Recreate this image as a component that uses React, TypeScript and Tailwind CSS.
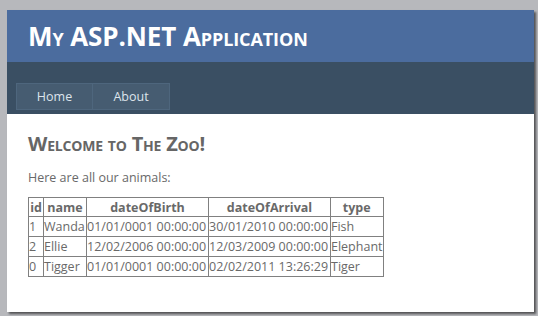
import React from "react";

const rows = [
  ["1", "Wanda", "01/01/0001 00:00:00", "30/01/2010 00:00:00", "Fish"],
  ["2", "Ellie", "12/02/2006 00:00:00", "12/03/2009 00:00:00", "Elephant"],
  ["0", "Tigger", "01/01/0001 00:00:00", "02/02/2011 13:26:29", "Tiger"],
];

const widths = ["w-[15px]", "w-[43px]", "w-[122px]", "w-[122px]", "w-[52px]"];

export default function App() {
  return (
    <div
      className="w-[538px] h-[316px] bg-[#b7b8bc] pt-[10px] pl-[7px] overflow-hidden"
      style={{ fontFamily: '"Open Sans", "Noto Sans", sans-serif' }}
    >
      <div className="w-[527px] h-[302px] bg-white shadow-[2px_2px_2px_rgba(0,0,0,0.55)] flex flex-col">
        <div className="h-[52px] bg-[#4b6c9e] flex items-center pl-[21px] pb-[1px]">
          <h1 className="text-white font-bold text-[26px] leading-none [font-variant:small-caps] tracking-[-0.1px]">
            My ASP.NET Application
          </h1>
        </div>
        <div className="h-[52px] bg-[#3a4f63] pt-[21px] pl-[9px]">
          <div className="flex">
            <div className="w-[77px] h-[27px] bg-[#465c71] border border-[#4e667d] flex items-center justify-center pt-[2px] text-[#dde4ec] text-[12.5px]">
              Home
            </div>
            <div className="w-[77px] h-[27px] bg-[#465c71] border border-[#4e667d] border-l-0 flex items-center justify-center pt-[2px] text-[#dde4ec] text-[12.5px]">
              About
            </div>
          </div>
        </div>
        <div className="pl-[21px] pt-[20px] text-[#696969]">
          <h2 className="font-bold text-[20px] leading-none [font-variant:small-caps] text-[#666666] tracking-[-0.2px]">
            Welcome to The Zoo!
          </h2>
          <p className="text-[12.5px] mt-[16px] leading-[16px]">Here are all our animals:</p>
          <table className="mt-[11px] border-collapse text-[12.5px] leading-[17px]">
            <thead>
              <tr>
                {["id", "name", "dateOfBirth", "dateOfArrival", "type"].map((h, i) => (
                  <th
                    key={h}
                    className={`${widths[i]} border border-[#808080] font-bold text-center px-0 py-0 h-[19px]`}
                  >
                    {h}
                  </th>
                ))}
              </tr>
            </thead>
            <tbody>
              {rows.map((r) => (
                <tr key={r[0]}>
                  {r.map((c, i) => (
                    <td
                      key={i}
                      className={`${widths[i]} border border-[#808080] text-left px-0 py-0 h-[20px] whitespace-nowrap`}
                    >
                      {c}
                    </td>
                  ))}
                </tr>
              ))}
            </tbody>
          </table>
        </div>
      </div>
    </div>
  );
}
